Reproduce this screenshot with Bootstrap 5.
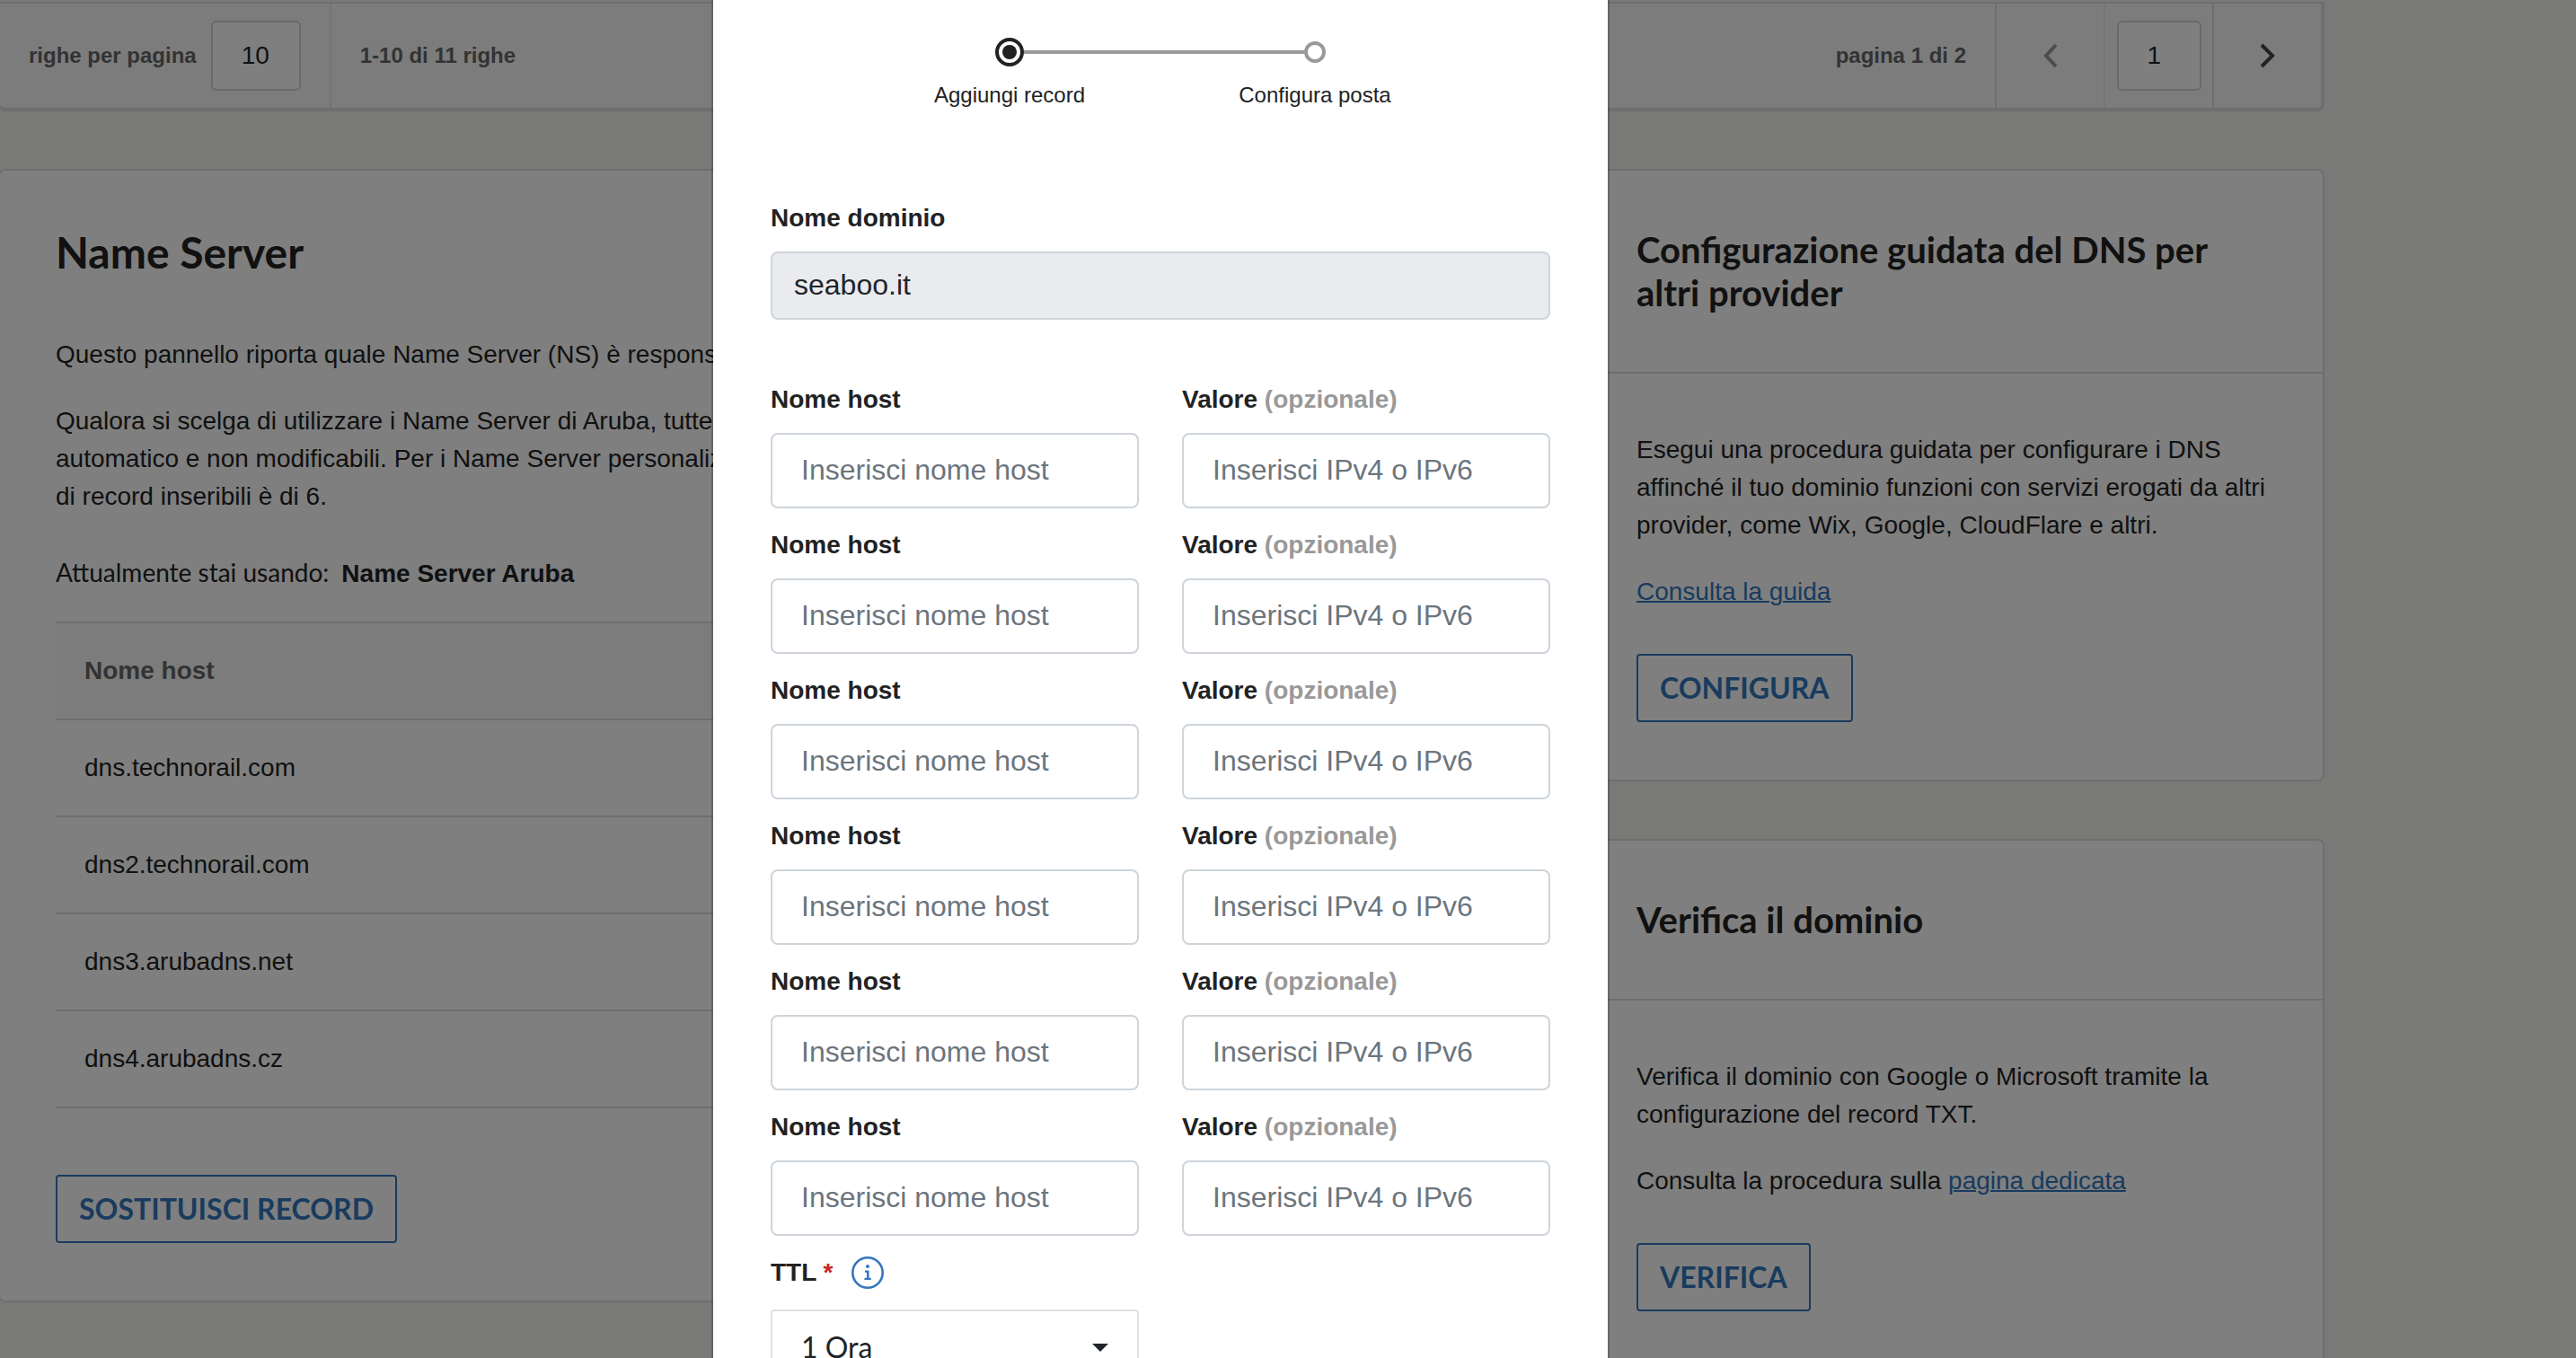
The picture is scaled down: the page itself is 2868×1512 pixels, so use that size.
<!DOCTYPE html>
<html lang="it">
<head>
<meta charset="utf-8">
<meta name="viewport" content="width=device-width, initial-scale=1">
<title>Gestione DNS - Name Server</title>
<link href="https://cdn.jsdelivr.net/npm/bootstrap@5.3.0/dist/css/bootstrap.min.css" rel="stylesheet">
<style>
:root { --ink: #222; --muted: #666; --soft: #999; --line: #ddd; --field: #ced4da; --brand: #3277bd; }
body { font-family: "Liberation Sans", Arial, sans-serif; font-size: 28px; line-height: 42px; color: var(--ink); background: #f2f2ee; overflow: hidden; height: 100vh; }
h1, h2, .btn-brand, .lato { font-family: Lato, sans-serif; }
p { margin-bottom: 32px; }
a { color: var(--brand); text-decoration-thickness: 2px; }

.page-area { margin-left: -2px; padding-right: 280px; }
.stack { gap: 64px; }
.side-col { flex: 0 0 830px; }

/* pager under the records table */
.pager { background: #f9f9f9; border: 2px solid var(--line); border-right-width: 4px; border-bottom-width: 4px; border-radius: 0 0 8px 8px; margin-top: 2px; height: 122px; font-size: 24px; font-weight: 700; color: var(--muted); }
.pager-size { padding: 0 32px; gap: 16px; border-right: 2px solid #e6e6e6; }
.pager-cell { width: 121px; border-left: 2px solid var(--line); }
.pager-cell.faint { border-left-color: #ececec; }
.pager .form-control { height: 78px; padding: 0 0 0 32px; border: 2px solid var(--field); border-radius: 6px; font-size: 28px; color: var(--ink); background: #fff; }
.in-size { width: 100px; }
.in-page { width: 94px; }
.pager button { background: none; border: 0; padding: 0; color: #444; line-height: 0; }
.pager button:disabled { color: var(--soft); }

/* panels */
.panel { --bs-card-border-color: var(--line); --bs-card-border-width: 2px; --bs-card-border-radius: 8px; --bs-card-inner-border-radius: 6px; color: var(--ink); }
.panel .card-header { background: none; padding: 64px 62px; border-bottom: 2px solid var(--line); }
.panel .card-body { padding: 64px 62px; }
.panel .card-body:first-child { padding-top: 62px; }
.panel h1 { font-size: 48px; line-height: 58px; font-weight: 700; margin-bottom: 64px; }
.panel h2 { font-size: 40px; line-height: 48px; font-weight: 700; margin: 0; }
.in-use { margin: 42px 0 32px; gap: 14px; }
.hosts { --bs-table-color: var(--ink); margin-bottom: 74px; border-top: 2px solid var(--line); }
.hosts > :not(caption) > * > * { padding: 32px; border-bottom: 2px solid var(--line); }
.hosts thead th { background: #f9f9f9; color: var(--muted); }
.btn-brand { border: 2px solid var(--brand); color: var(--brand); border-radius: 4px; font-size: 32px; font-weight: 700; line-height: 40px; padding: 16px 24px; }
.cta { margin-top: 48px; }

/* dialog */
.modal-shift { padding-right: 284px; }
.modal-shift .modal-dialog { max-width: 1000px; margin: 0 auto; }
.modal-shift .modal-content { border: 2px solid rgba(0, 0, 0, .2); border-width: 0 2px; border-radius: 0; padding: 42px 64px 120px; color: var(--ink); background-clip: padding-box; }
.steps { margin-bottom: 98px; padding-left: 4px; font-size: 24px; line-height: 36px; }
.steps li { width: 340px; }
.track { height: 32px; margin-bottom: 14px; }
.rail { height: 4px; flex: 1; }
.rail.on { background: var(--soft); }
.dot { width: 24px; height: 24px; border: 4px solid var(--soft); border-radius: 50%; }
.dot.now { width: 32px; height: 32px; border-color: var(--ink); padding: 4px; }
.dot.now::before { content: ""; display: block; height: 16px; border-radius: 50%; background: var(--ink); }
.modal .form-label { display: block; font-weight: 700; margin-bottom: 16px; }
.modal .form-label .opt { color: var(--soft); }
.modal .form-control { height: 84px; padding: 0 32px 2px; font-size: 32px; line-height: 48px; border: 2px solid var(--field); border-radius: 8px; color: #212529; }
.modal .form-control::placeholder { color: #6c757d; }
.modal .form-control.locked { height: 76px; padding: 0 24px 2px; background: #eaebef; }
.domain { margin-bottom: 68px; }
.hostgrid { --bs-gutter-x: 48px; --bs-gutter-y: 20px; }
.ttl-head { gap: 20px; margin-bottom: 20px; }
.ttl-head .form-label { margin: 0; }
.req { color: #c62828; }
.info { border: 0; background: none; padding: 0; line-height: 0; color: var(--brand); }
.modal .form-select { height: 84px; padding: 0 32px; font-family: Lato, sans-serif; font-size: 32px; line-height: 48px; border: 2px solid #dee2e6; border-radius: 4px; color: #212529; background-image: url("data:image/svg+xml,%3Csvg xmlns='http://www.w3.org/2000/svg' viewBox='0 0 18 9'%3E%3Cpath d='M0 0h18L9 9z' fill='%23212529'/%3E%3C/svg%3E"); background-size: 18px 9px; background-position: right 32px center; }
</style>
<script src="https://cdn.jsdelivr.net/npm/bootstrap@5.3.0/dist/js/bootstrap.bundle.min.js" defer></script>
</head>
<body class="modal-open">

<main class="page-area d-flex flex-column stack">
  <nav class="pager d-flex align-items-stretch" aria-label="Paginazione record">
    <div class="pager-size d-flex align-items-center">
      <label for="rows">righe per pagina</label>
      <input id="rows" class="form-control in-size" type="text" value="10">
    </div>
    <div class="d-flex align-items-center flex-grow-1 ps-4"><span class="ps-2">1-10 di 11 righe</span></div>
    <label for="page" class="d-flex align-items-center pe-4"><span class="pe-2">pagina 1 di 2</span></label>
    <div class="pager-cell d-flex align-items-center justify-content-center">
      <button type="button" disabled aria-label="Pagina precedente">
        <svg width="18" height="28" viewBox="0 0 18 28" fill="none" stroke="currentColor" stroke-width="4"><path d="M15 2 4 14l11 12"/></svg>
      </button>
    </div>
    <div class="pager-cell faint d-flex align-items-center justify-content-center">
      <input id="page" class="form-control in-page" type="text" value="1">
    </div>
    <div class="pager-cell d-flex align-items-center justify-content-center">
      <button type="button" aria-label="Pagina successiva">
        <svg width="18" height="28" viewBox="0 0 18 28" fill="none" stroke="currentColor" stroke-width="4"><path d="M2 2l12 12L2 26"/></svg>
      </button>
    </div>
  </nav>

  <div class="d-flex align-items-start stack">
    <section class="card panel flex-grow-1">
      <div class="card-body">
        <h1>Name Server</h1>
        <p>Questo pannello riporta quale Name Server (NS) è responsabile della gestione del dominio.</p>
        <p class="mb-0">Qualora si scelga di utilizzare i Name Server di Aruba, tutte le impostazioni saranno inserite in modo<br>
          automatico e non modificabili. Per i Name Server personalizzati è possibile inserirli. Il massimo<br>
          di record inseribili è di 6.</p>
        <div class="in-use d-flex align-items-baseline"><span class="lato">Attualmente stai usando:</span><strong>Name Server Aruba</strong></div>
        <table class="table hosts">
          <thead><tr><th scope="col">Nome host</th></tr></thead>
          <tbody>
            <tr><td>dns.technorail.com</td></tr>
            <tr><td>dns2.technorail.com</td></tr>
            <tr><td>dns3.arubadns.net</td></tr>
            <tr><td>dns4.arubadns.cz</td></tr>
          </tbody>
        </table>
        <button type="button" class="btn btn-brand d-block">SOSTITUISCI RECORD</button>
      </div>
    </section>

    <aside class="side-col d-flex flex-column stack">
      <section class="card panel">
        <div class="card-header"><h2>Configurazione guidata del DNS per altri provider</h2></div>
        <div class="card-body">
          <p>Esegui una procedura guidata per configurare i DNS affinché il tuo dominio funzioni con servizi erogati da altri provider, come Wix, Google, CloudFlare e altri.</p>
          <p class="mb-0"><a href="#">Consulta la guida</a></p>
          <button type="button" class="btn btn-brand cta d-block">CONFIGURA</button>
        </div>
      </section>
      <section class="card panel">
        <div class="card-header"><h2>Verifica il dominio</h2></div>
        <div class="card-body">
          <p>Verifica il dominio con Google o Microsoft tramite la configurazione del record TXT.</p>
          <p class="mb-0">Consulta la procedura sulla <a href="#">pagina dedicata</a></p>
          <button type="button" class="btn btn-brand cta d-block">VERIFICA</button>
        </div>
      </section>
    </aside>
  </div>
</main>

<div class="modal-backdrop show"></div>
<div class="modal modal-shift d-block overflow-hidden" role="dialog" aria-modal="true" aria-label="Sostituisci record">
  <div class="modal-dialog">
    <form class="modal-content">
      <ol class="steps list-unstyled d-flex justify-content-center text-center">
        <li>
          <div class="track d-flex align-items-center"><span class="rail"></span><span class="dot now"></span><span class="rail on"></span></div>
          Aggiungi record
        </li>
        <li>
          <div class="track d-flex align-items-center"><span class="rail on"></span><span class="dot"></span><span class="rail"></span></div>
          Configura posta
        </li>
      </ol>

      <div class="domain">
        <label class="form-label" for="domain">Nome dominio</label>
        <input id="domain" class="form-control locked" type="text" value="seaboo.it" disabled>
      </div>

      <div class="row hostgrid mt-0">
        <div class="col-6 mt-0"><label class="form-label" for="h1">Nome host</label><input id="h1" class="form-control" type="text" placeholder="Inserisci nome host"></div>
        <div class="col-6 mt-0"><label class="form-label" for="v1">Valore <span class="opt">(opzionale)</span></label><input id="v1" class="form-control" type="text" placeholder="Inserisci IPv4 o IPv6"></div>
        <div class="col-6"><label class="form-label" for="h2">Nome host</label><input id="h2" class="form-control" type="text" placeholder="Inserisci nome host"></div>
        <div class="col-6"><label class="form-label" for="v2">Valore <span class="opt">(opzionale)</span></label><input id="v2" class="form-control" type="text" placeholder="Inserisci IPv4 o IPv6"></div>
        <div class="col-6"><label class="form-label" for="h3">Nome host</label><input id="h3" class="form-control" type="text" placeholder="Inserisci nome host"></div>
        <div class="col-6"><label class="form-label" for="v3">Valore <span class="opt">(opzionale)</span></label><input id="v3" class="form-control" type="text" placeholder="Inserisci IPv4 o IPv6"></div>
        <div class="col-6"><label class="form-label" for="h4">Nome host</label><input id="h4" class="form-control" type="text" placeholder="Inserisci nome host"></div>
        <div class="col-6"><label class="form-label" for="v4">Valore <span class="opt">(opzionale)</span></label><input id="v4" class="form-control" type="text" placeholder="Inserisci IPv4 o IPv6"></div>
        <div class="col-6"><label class="form-label" for="h5">Nome host</label><input id="h5" class="form-control" type="text" placeholder="Inserisci nome host"></div>
        <div class="col-6"><label class="form-label" for="v5">Valore <span class="opt">(opzionale)</span></label><input id="v5" class="form-control" type="text" placeholder="Inserisci IPv4 o IPv6"></div>
        <div class="col-6"><label class="form-label" for="h6">Nome host</label><input id="h6" class="form-control" type="text" placeholder="Inserisci nome host"></div>
        <div class="col-6"><label class="form-label" for="v6">Valore <span class="opt">(opzionale)</span></label><input id="v6" class="form-control" type="text" placeholder="Inserisci IPv4 o IPv6"></div>
        <div class="col-6">
          <div class="ttl-head d-flex align-items-center">
            <label class="form-label" for="ttl">TTL <span class="req">*</span></label>
            <button type="button" class="info" aria-label="Informazioni sul TTL">
              <svg width="36" height="36" viewBox="0 0 36 36"><circle cx="18" cy="18" r="16.7" fill="none" stroke="currentColor" stroke-width="2.600"/><circle cx="18" cy="11" r="2" fill="currentColor"/><path d="M15 15.500h4.500v8.300h2.300v2.200h-7.300v-2.200h2.500v-6.100h-2z" fill="currentColor"/></svg>
            </button>
          </div>
          <select id="ttl" class="form-select">
            <option>1 Ora</option>
            <option>6 Ore</option>
            <option>12 Ore</option>
            <option>24 Ore</option>
          </select>
        </div>
      </div>
    </form>
  </div>
</div>
</body>
</html>
